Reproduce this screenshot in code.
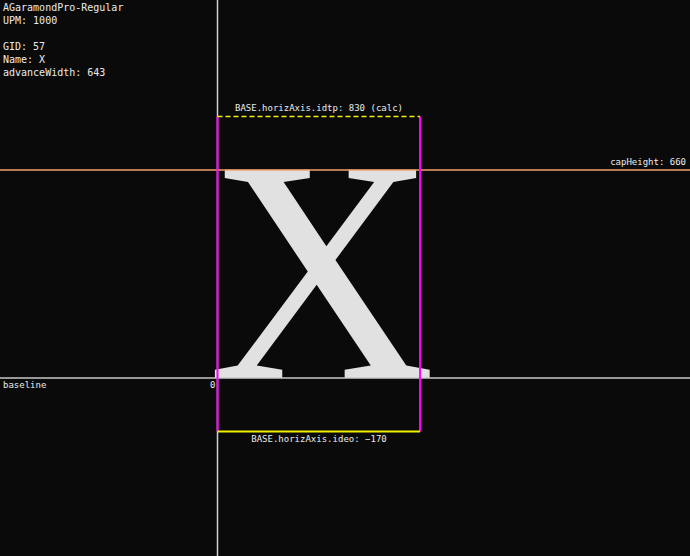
const info = ['AGaramondPro-Regular', 'UPM: 1000', '', 'GID: 57', 'Name: X', 'advanceWidth: 643']

// glyph metrics -> px (baseline at y=378, 0.315 px per unit)
const ORIGIN_X = 217.5
const BASE_Y = 378
const S = 0.315
const y = (u: number) => BASE_Y - u * S
const adv = ORIGIN_X + 643 * S

function GlyphCanvas() {
  return (
    <svg className="absolute inset-0" width={690} height={556} viewBox="0 0 690 556">
      <g transform={`translate(208 ${BASE_Y}) scale(0.99 1)`}>
        <text x={0} y={0} fontSize={318} fill="#e1e1e1" fontFamily="'Liberation Serif', 'Times New Roman', serif">
          X
        </text>
      </g>
      {/* origin + baseline */}
      <line x1={ORIGIN_X} y1={0} x2={ORIGIN_X} y2={556} stroke="#d0d0d0" strokeWidth={1.5} />
      <line x1={0} y1={BASE_Y} x2={690} y2={BASE_Y} stroke="#c8c8c8" strokeWidth={1.5} />
      {/* capHeight */}
      <line x1={0} y1={y(660)} x2={690} y2={y(660)} stroke="#f4a268" strokeWidth={1.5} />
      {/* advance box */}
      <line x1={ORIGIN_X} y1={y(830)} x2={ORIGIN_X} y2={y(-170)} stroke="#ff00ff" strokeWidth={2} />
      <line x1={adv} y1={y(830)} x2={adv} y2={y(-170)} stroke="#ff00ff" strokeWidth={2} />
      <line x1={ORIGIN_X} y1={y(830)} x2={adv} y2={y(830)} stroke="#f0f000" strokeWidth={1.5} strokeDasharray="5 3" />
      <line x1={ORIGIN_X} y1={y(-170)} x2={adv} y2={y(-170)} stroke="#f0f000" strokeWidth={2} />
    </svg>
  )
}

export default function App() {
  return (
    <div className="relative h-[556px] w-[690px] overflow-hidden bg-[#0a0a0a] text-[#ececec] font-['DejaVu_Sans_Mono',monospace]">
      <GlyphCanvas />
      <div className="relative pl-[3px] pt-px text-[10px] leading-[13px]">
        {info.map((line, i) => (
          <div key={i} className="h-[13px] whitespace-pre">{line}</div>
        ))}
      </div>

      <div className="absolute left-[219px] top-[103px] w-[200px] text-center text-[9px] leading-[11px] whitespace-pre">
        BASE.horizAxis.idtp: 830 (calc)
      </div>
      <div className="absolute right-[4px] top-[157px] text-[9px] leading-[11px]">capHeight: 660</div>
      <div className="absolute left-[3px] top-[380px] text-[9px] leading-[11px]">baseline</div>
      <div className="absolute left-[210px] top-[380px] text-[9px] leading-[11px]">0</div>
      <div className="absolute left-[219px] top-[434px] w-[200px] text-center text-[9px] leading-[11px] whitespace-pre">
        BASE.horizAxis.ideo: −170
      </div>
    </div>
  )
}
